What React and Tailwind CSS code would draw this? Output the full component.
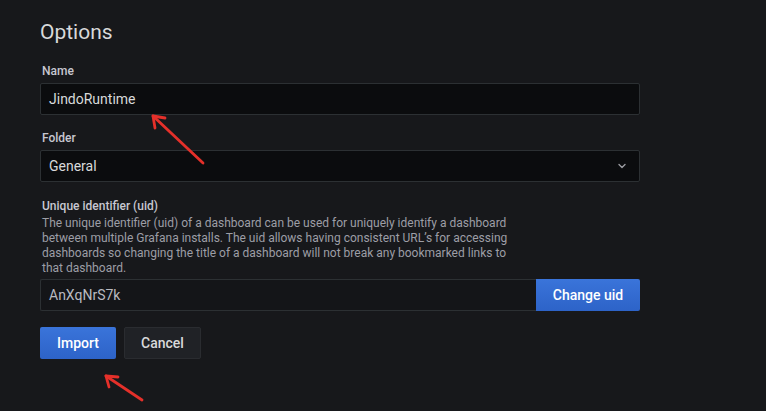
import React from "react";

function Label({ children }) {
  return (
    <div className="text-[12px] leading-4 font-medium text-[#c7c7d1] pl-[2px] mb-1">
      {children}
    </div>
  );
}

export default function App() {
  return (
    <div
      className="relative w-[766px] h-[411px] overflow-hidden bg-[#17181b] text-[#d8d9da]"
      style={{ fontFamily: "Roboto, 'Liberation Sans', sans-serif" }}
    >
      <div className="pl-10 pt-5 w-[640px]">
        <h3 className="text-[21px] leading-6 font-normal text-[#d8d9da] mb-[19px]">Options</h3>

        <Label>Name</Label>
        <div className="h-8 border border-[#2c3033] bg-[#0b0c0e] rounded-[2px] flex items-center px-2 text-[14px] text-[#d8d9da]">
          JindoRuntime
        </div>

        <div className="mt-[15px]">
          <Label>Folder</Label>
          <div className="h-8 border border-[#2c3033] bg-[#0b0c0e] rounded-[2px] flex items-center justify-between px-2 text-[14px] text-[#d8d9da]">
            <span>General</span>
            <svg width="10" height="10" viewBox="0 0 10 10" className="mr-[4px]">
              <path d="M2 3.5 L5 6.5 L8 3.5" stroke="#9a9ba0" strokeWidth="1.4" fill="none" strokeLinecap="round" strokeLinejoin="round" />
            </svg>
          </div>
        </div>

        <div className="mt-4">
          <div className="text-[12px] leading-4 font-medium text-[#c7c7d1] pl-[2px]">Unique identifier (uid)</div>
          <div className="mt-[2px] text-[12px] leading-[15px] text-[#9d9ea6] pl-[2px] w-[470px]">
            The unique identifier (uid) of a dashboard can be used for uniquely identify a dashboard between multiple Grafana installs. The uid allows having consistent URL’s for accessing dashboards so changing the title of a dashboard will not break any bookmarked links to that dashboard.
          </div>
          <div className="flex mt-[3px] h-8">
            <div className="flex-1 border border-[#2c3033] border-r-0 bg-[#141518] rounded-l-[2px] flex items-center px-2 text-[14px] text-[#b9bac0]">
              AnXqNrS7k
            </div>
            <button className="w-[104px] h-8 rounded-r-[2px] bg-gradient-to-b from-[#3a74da] to-[#2d63c8] text-white text-[14px] font-medium">
              Change uid
            </button>
          </div>
        </div>

        <div className="flex gap-2 mt-4">
          <button className="w-[76px] h-8 rounded-[2px] bg-gradient-to-b from-[#3a74da] to-[#2d63c8] text-white text-[14px] font-medium">
            Import
          </button>
          <button className="w-[77px] h-8 rounded-[2px] bg-[#202226] border border-[#2a2c30] text-[#d8d9da] text-[14px] font-medium">
            Cancel
          </button>
        </div>
      </div>

      <svg className="absolute inset-0 pointer-events-none" width="766" height="411" viewBox="0 0 766 411">
        <g stroke="#e5302a" strokeWidth="2.8" fill="none" strokeLinecap="round" strokeLinejoin="round">
          <path d="M203 163 L153 116" />
          <path d="M165 118 L153 116 L155 128" />
          <path d="M142 400 L106 376" />
          <path d="M118 377 L106 376 L109 387" />
        </g>
      </svg>
    </div>
  );
}
